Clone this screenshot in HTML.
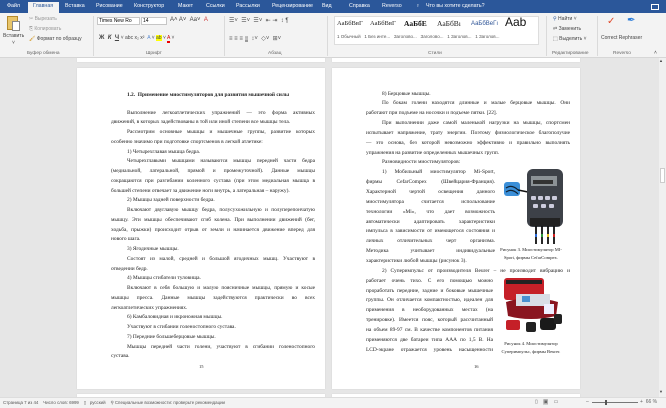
<!DOCTYPE html>
<html><head><meta charset="utf-8"><style>
*{margin:0;padding:0;box-sizing:border-box}
body{width:666px;height:408px;overflow:hidden;background:#e6e6e6;font-family:"Liberation Sans",sans-serif;position:relative}
.a{position:absolute;white-space:nowrap}
#tabs{position:absolute;left:0;top:0;width:666px;height:13px;background:#2b579a}
.t{position:absolute;top:3px;font-size:5.3px;color:#fff}
#rib{position:absolute;left:0;top:13px;width:666px;height:45px;background:#f3f3f3;border-bottom:1px solid #d6d6d6}
.s{font-size:5px;color:#444}
.g{font-size:4.8px;color:#666;top:38px}
.sep{position:absolute;top:3px;width:1px;height:40px;background:#dadada}
.pg{position:absolute;background:#fff;box-shadow:0 0 1px #c8c8c8}
.txt{font-family:"Liberation Serif",serif;font-size:5.4px;color:#222;position:absolute;white-space:nowrap;line-height:6px}
.j{text-align:justify;text-align-last:justify;white-space:normal}
</style></head><body>
<div id="tabs">
<div class="t" style="left:7px">Файл</div>
<div class="a" style="left:28px;top:2px;width:31px;height:12px;background:#f3f3f3"></div>
<div class="t" style="left:33px;color:#2b579a">Главная</div>
<div class="t" style="left:65px">Вставка</div>
<div class="t" style="left:96px">Рисование</div>
<div class="t" style="left:134px">Конструктор</div>
<div class="t" style="left:178px">Макет</div>
<div class="t" style="left:206px">Ссылки</div>
<div class="t" style="left:236px">Рассылки</div>
<div class="t" style="left:272px">Рецензирование</div>
<div class="t" style="left:322px">Вид</div>
<div class="t" style="left:349px">Справка</div>
<div class="t" style="left:382px">Reverso</div>
<div class="t" style="left:416px">♀</div>
<div class="t" style="left:426px">Что вы хотите сделать?</div>
<div class="a" style="left:651px;top:4px;width:8px;height:6px;border:1px solid #fff"></div>
</div>
<div id="rib">
<div class="a" style="left:7px;top:3px;width:11px;height:14px;background:#e8c56a;border:1px solid #b48a2c"></div>
<div class="a" style="left:12px;top:8px;width:8px;height:10px;background:#fff;border:1px solid #888"></div>
<div class="a s" style="left:3px;top:20px">Вставить</div>
<div class="a s" style="left:12px;top:27px">˅</div>
<div class="a s" style="left:29px;top:3px;color:#999">✂ Вырезать</div>
<div class="a s" style="left:29px;top:13px;color:#999">⎘ Копировать</div>
<div class="a s" style="left:29px;top:23px"><span style="color:#c80">🖌</span> Формат по образцу</div>
<div class="a g" style="left:27px">Буфер обмена</div>
<div class="sep" style="left:93px"></div>
<div class="a" style="left:97px;top:4px;width:43px;height:8px;background:#fff;border:1px solid #c6c6c6;font-size:5px;padding-left:1px;line-height:6px">Times New Ro</div>
<div class="a" style="left:141px;top:4px;width:26px;height:8px;background:#fff;border:1px solid #c6c6c6;font-size:5px;padding-left:1px;line-height:6px">14</div>
<div class="a s" style="left:170px;top:4px;font-size:6px">A˄ A˅ &nbsp;Aa˅ &nbsp;<span style="color:#c33">A</span></div>
<div class="a s" style="left:99px;top:22px;font-size:6px;font-weight:bold">Ж &nbsp;<i>К</i> &nbsp;<u>Ч</u> <span style="font-weight:normal;font-size:5px">˅ abc x₂ x²  &nbsp;<span style="color:#5b8bd0">A</span> ˅ <span style="background:#ff0">ab</span> ˅ <span style="color:#c00;border-bottom:2px solid #e00">A</span> ˅</span></div>
<div class="a g" style="left:146px">Шрифт</div>
<div class="sep" style="left:224px"></div>
<div class="a s" style="left:229px;top:4px;font-size:6px;color:#555">☰˅ &nbsp;☰˅ &nbsp;☰˅ &nbsp;⇤ ⇥ &nbsp;↕ ¶</div>
<div class="a s" style="left:229px;top:22px;font-size:6px;color:#555">≡ ≡ ≡ <span style="background:#999;color:#fff">≡</span> &nbsp;↕˅ &nbsp;◇˅ &nbsp;⊞˅</div>
<div class="a g" style="left:268px">Абзац</div>
<div class="sep" style="left:327px"></div>
<div class="a" style="left:334px;top:3px;width:205px;height:29px;background:#fff;border:1px solid #ddd"></div>
<div class="a" style="left:337px;top:7px;font-family:'Liberation Serif',serif;font-size:6.5px;color:#222">АаБбВвГ</div>
<div class="a" style="left:370px;top:7px;font-family:'Liberation Serif',serif;font-size:6.5px;color:#222">АаБбВвГ</div>
<div class="a" style="left:404px;top:6px;font-family:'Liberation Serif',serif;font-size:7.5px;font-weight:bold;color:#111">АаБбЕ</div>
<div class="a" style="left:437px;top:6px;font-family:'Liberation Serif',serif;font-size:7.5px;color:#222">АаБбВı</div>
<div class="a" style="left:471px;top:8px;font-size:6px;color:#2f5597">АаБбВеГı</div>
<div class="a" style="left:505px;top:2px;font-size:12px;color:#111">Aab</div>
<div class="a s" style="left:337px;top:21px;font-size:4.5px;color:#555">1 Обычный &nbsp;&nbsp;1 Без инте... &nbsp;&nbsp;Заголово... &nbsp;&nbsp;Заголово... &nbsp;&nbsp;1 Заголов... &nbsp;&nbsp;1 Заголов...</div>
<div class="a g" style="left:428px">Стили</div>
<div class="sep" style="left:546px"></div>
<div class="a s" style="left:553px;top:3px"><span style="color:#2b579a">⚲</span> Найти ˅</div>
<div class="a s" style="left:553px;top:13px"><span style="color:#777">⇄</span> Заменить</div>
<div class="a s" style="left:553px;top:23px">⬚ Выделить ˅</div>
<div class="a g" style="left:552px">Редактирование</div>
<div class="sep" style="left:597px"></div>
<div class="a" style="left:607px;top:3px;font-size:10px;color:#e04a2b">✓</div>
<div class="a" style="left:627px;top:2px;font-size:10px;color:#2a7bd8">✒</div>
<div class="a s" style="left:601px;top:22px">Correct Rephraser</div>
<div class="a g" style="left:613px">Reverso</div>
<div class="a s" style="left:654px;top:37px">˄</div>
</div>
<!-- previous pages bottom -->
<div class="pg" style="left:77px;top:58px;width:248px;height:4px"></div>
<div class="pg" style="left:332px;top:58px;width:248px;height:4px"></div>
<!-- left page -->
<div class="pg" style="left:77px;top:68px;width:248px;height:321px"></div>
<div class="txt" style="left:127px;top:92px;font-weight:bold">1.2.&nbsp; Применение миостимуляторов для развития мышечной силы</div>
<div id="L"></div>
<!-- right page -->
<div class="pg" style="left:332px;top:68px;width:248px;height:321px"></div>
<div id="R"></div>
<div class="pg" style="left:77px;top:394px;width:248px;height:4px"></div>
<div class="pg" style="left:332px;top:394px;width:248px;height:4px"></div>
<!-- images -->
<svg class="a" style="left:500px;top:166px" width="68" height="80" viewBox="0 0 68 80">
<rect x="4" y="16" width="16" height="14" rx="3" fill="#3b8fd8"/>
<path d="M6 22 q6 -4 12 2 M6 26 q6-4 12 2" stroke="#123" stroke-width="1.2" fill="none"/>
<path d="M18 24 L28 26" stroke="#111" stroke-width="1.5"/>
<rect x="27" y="3" width="36" height="58" rx="6" fill="#3d4148"/>
<rect x="31" y="10" width="26" height="10" fill="#8c9296"/>
<rect x="33" y="14" width="20" height="4" fill="#333"/>
<g fill="#ccd"><rect x="31" y="30" width="5" height="4" rx="1"/><rect x="38" y="30" width="5" height="4" rx="1"/><rect x="45" y="30" width="5" height="4" rx="1"/><rect x="52" y="30" width="5" height="4" rx="1"/><rect x="33" y="38" width="5" height="4" rx="1"/><rect x="41" y="38" width="5" height="4" rx="1"/><rect x="49" y="38" width="5" height="4" rx="1"/></g>
<rect x="30" y="52" width="30" height="8" fill="#222"/>
<g stroke-width="1.8"><path d="M36 60 V78" stroke="#111"/><path d="M42 60 V78" stroke="#111"/><path d="M48 60 V78" stroke="#111"/><path d="M54 60 V78" stroke="#111"/></g>
<rect x="35" y="68" width="2" height="3" fill="#2a6ad8"/><rect x="41" y="68" width="2" height="3" fill="#2a9a3a"/><rect x="47" y="68" width="2" height="3" fill="#e8c020"/><rect x="53" y="68" width="2" height="3" fill="#d02020"/>
</svg>
<svg class="a" style="left:500px;top:276px" width="64" height="62" viewBox="0 0 64 62">
<rect x="4" y="2" width="40" height="22" rx="3" fill="#c52028"/>
<rect x="6" y="4" width="36" height="4" fill="#222"/>
<path d="M6 26 Q30 18 58 26 L56 40 Q30 46 8 40 Z" fill="#8a1520"/>
<rect x="16" y="18" width="34" height="12" fill="#d8dde6"/>
<rect x="22" y="20" width="8" height="6" fill="#4a90d0"/>
<rect x="44" y="28" width="10" height="10" fill="#eef"/>
<rect x="6" y="44" width="14" height="10" rx="2" fill="#c52028"/>
<rect x="26" y="46" width="10" height="10" rx="2" fill="#222"/>
<rect x="40" y="42" width="16" height="12" rx="3" fill="#1a1a1a"/>
<rect x="54" y="38" width="8" height="10" rx="2" fill="#222"/>
</svg>
<div class="txt" style="left:500px;top:246px;width:62px;text-align:center;font-size:4.6px;line-height:8px;white-space:normal">Рисунок 3. Миостимулятор MI-Sport, фирмы CefarCompex.</div>
<div class="txt" style="left:498px;top:340px;width:66px;text-align:center;font-size:4.6px;line-height:8px;white-space:normal">Рисунок 4. Миостимулятор Суперимпульс, фирмы Beurer.</div>
<div class="txt" style="left:199px;top:364px;font-size:4.5px">15</div>
<div class="txt" style="left:474px;top:364px;font-size:4.5px">16</div>
<!-- scrollbar -->
<div class="a" style="left:659px;top:58px;width:7px;height:339px;background:#f0f0f0"></div>
<div class="a" style="left:660px;top:168px;width:5px;height:15px;background:#fff;border:1px solid #ccc"></div>
<div class="a" style="left:659px;top:58px;font-size:4px;color:#444">▲</div>
<div class="a" style="left:659px;top:389px;font-size:4px;color:#444">▼</div>
<!-- status -->
<div class="a" style="left:0;top:397px;width:666px;height:11px;background:#f3f3f3;border-top:1px solid #ddd"></div>
<div class="a" style="left:3px;top:400px;font-size:4.4px;color:#555">Страница 7 из 44 &nbsp;&nbsp;&nbsp;Число слов: 6999 &nbsp;&nbsp;&nbsp;▯ &nbsp;&nbsp;русский &nbsp;&nbsp;&nbsp;⚲ Специальные возможности: проверьте рекомендации</div>
<div class="a" style="left:535px;top:399px;font-size:5px;color:#666">▯ &nbsp;&nbsp;&nbsp;<span style="background:#d0d0d0">▣</span> &nbsp;&nbsp;&nbsp;▭</div>
<div class="a" style="left:586px;top:399px;font-size:5px;color:#666">–</div>
<div class="a" style="left:592px;top:402px;width:46px;height:1px;background:#777"></div>
<div class="a" style="left:605px;top:400px;width:2px;height:5px;background:#555"></div>
<div class="a" style="left:640px;top:399px;font-size:5px;color:#666">+ &nbsp;66 %</div>
<script>
function render(id,x0,y0,pitch,lines){
 var h='';
 lines.forEach(function(l,i){
  var ind=l[1]?16:0,w=(l[3]||204)-ind;
  h+='<div class="txt'+(l[2]?' j':'')+'" style="left:'+(x0+ind)+'px;top:'+(y0+i*pitch)+'px;width:'+w+'px">'+l[0]+'</div>';
 });
 document.getElementById(id).outerHTML=h;
}
render('L',111,109.5,9.75,[
["Выполнение легкоатлетических упражнений — это форма активных",1,1],
["движений, в которых задействованы в той или иной степени все мышцы тела.",0,0],
["Рассмотрим основные мышцы и мышечные группы, развитие которых",1,1],
["особенно значимо при подготовке спортсменов в легкой атлетике:",0,0],
["1) Четырехглавая мышца бедра.",1,0],
["Четырехглавыми мышцами называются мышцы передней части бедра",1,1],
["(медиальной, латеральной, прямой и промежуточной). Данные мышцы",0,1],
["сокращаются при разгибании коленного сустава (при этом медиальная мышца в",0,1],
["большей степени отвечает за движение ноги внутрь, а латеральная – наружу).",0,0],
["2) Мышцы задней поверхности бедра.",1,0],
["Включают двуглавую мышцу бедра, полусухожильную и полуперепончатую",1,1],
["мышцу. Эти мышцы обеспечивают сгиб колена. При выполнении движений (бег,",0,1],
["ходьба, прыжки) происходит отрыв от земли и начинается движение вперед для",0,1],
["нового шага.",0,0],
["3) Ягодичные мышцы.",1,0],
["Состоят из малой, средней и большой ягодичных мышц. Участвуют в",1,1],
["отведении бедр.",0,0],
["4) Мышцы сгибатели туловища.",1,0],
["Включают в себя большую и малую поясничные мышцы, прямую и косые",1,1],
["мышцы пресса. Данные мышцы задействуются практически во всех",0,1],
["легкоатлетических упражнениях.",0,0],
["6) Камбаловидная и икроножная мышцы.",1,0],
["Участвуют в сгибании голеностопного сустава.",1,0],
["7) Передние большеберцовые мышцы.",1,0],
["Мышцы передней части голени, участвуют в сгибании голеностопного",1,1],
["сустава.",0,0]
]);
render('R',366,90.5,9.85,[
["8) Берцовые мышцы.",1,0],
["По бокам голени находятся длинные и малые берцовые мышцы. Они",1,1],
["работают при подъеме на носочки и подъеме пятки. [22].",0,0],
["При выполнении даже самой маленькой нагрузки на мышцы, спортсмен",1,1],
["испытывает напряжение, трату энергии. Поэтому физиологическое благополучие",0,1],
["— это основа, без которой невозможно эффективно и правильно выполнять",0,1],
["упражнения на развитие определенных мышечных групп.",0,0],
["Разновидности миостимуляторов:",1,0],
["1) Мобильный миостимулятор Mi-Sport,",1,1,129],
["фирмы CefarCompex (Швейцария-Франция).",0,1,129],
["Характерной чертой освещения данного",0,1,129],
["миостимулятора считается использование",0,1,129],
["технологии «Mi», что дает возможность",0,1,129],
["автоматически адаптировать характеристики",0,1,129],
["импульса в зависимости от имеющегося состояния и",0,1,129],
["личных отличительных черт организма.",0,1,129],
["Методика учитывает индивидуальные",0,1,129],
["характеристики любой мышцы (рисунок 3).",0,0],
["2) Суперимпульс от производителя Beurer – не производит вибрацию и",1,1],
["работает очень тихо. С его помощью можно",0,1,127],
["проработать передние, задние и боковые мышечные",0,1,127],
["группы. Он отличается компактностью, идеален для",0,1,127],
["применения в необорудованных местах (на",0,1,127],
["тренировке). Имеется пояс, который рассчитанный",0,1,127],
["на объем 89-97 см. В качестве компонентов питания",0,1,127],
["применяются две батареи типа ААА по 1,5 В. На",0,1,127],
["LCD-экране отражается уровень насыщенности",0,1,127]
]);
</script>
</body></html>
